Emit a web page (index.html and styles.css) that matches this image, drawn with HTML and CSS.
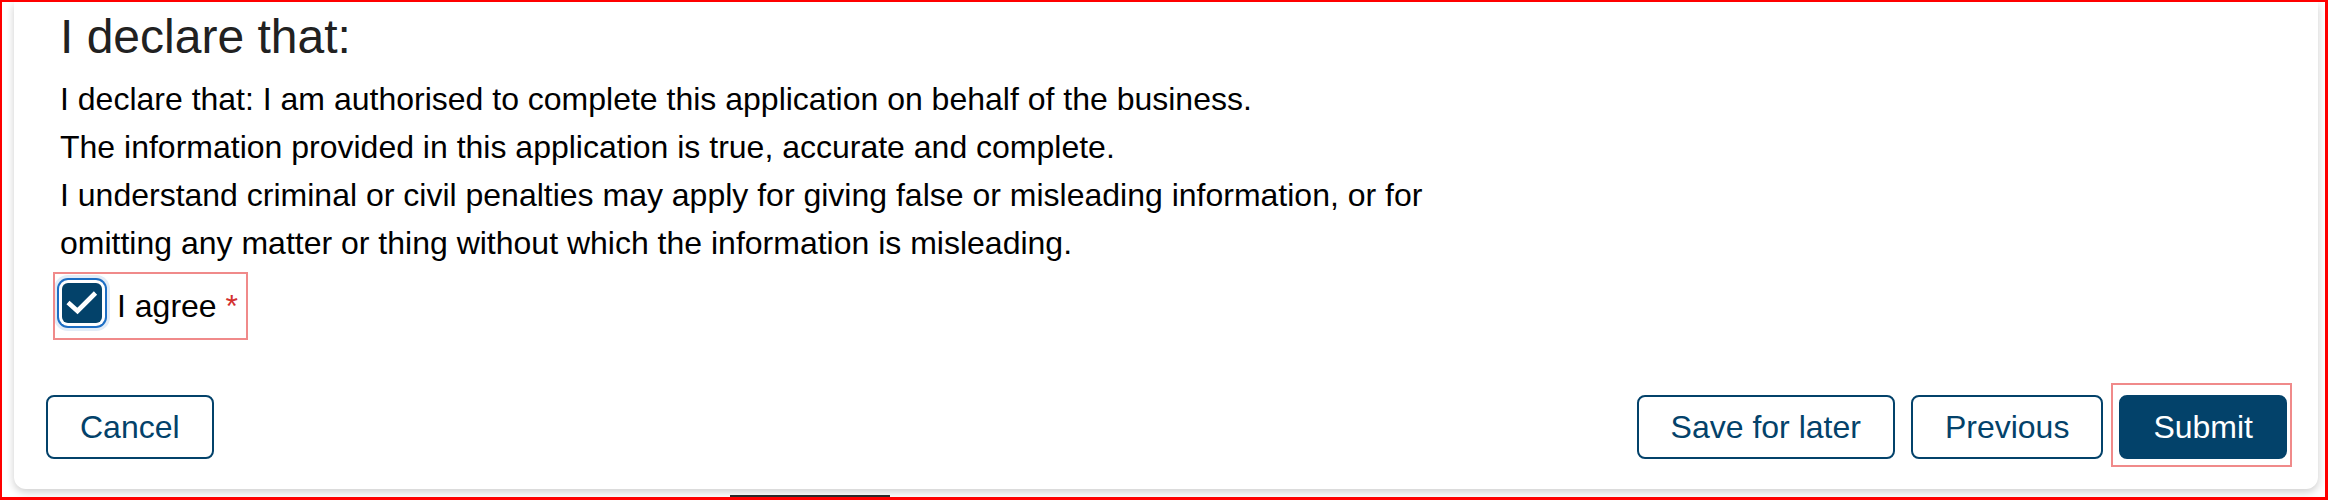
FILE: index.html
```html
<!DOCTYPE html>
<html lang="en">
<head>
<meta charset="utf-8">
<title>Declaration</title>
<link rel="stylesheet" href="styles.css">
</head>
<body>
<div class="frame">
  <div class="card">
    <section class="declaration">
      <h2 class="title">I declare that:</h2>
      <p class="statement">I declare that: I am authorised to complete this application on behalf of the business.<br>The information provided in this application is true, accurate and complete.<br>I understand criminal or civil penalties may apply for giving false or misleading information, or for omitting any matter or thing without which the information is misleading.</p>
      <label class="check-field">
        <span class="checkbox">
          <svg class="tick" viewBox="0 0 40 40" width="40" height="40" aria-hidden="true"><path d="M6 19.5 L15.5 28 L33.5 10" fill="none" stroke="#ffffff" stroke-width="4.6" stroke-linejoin="miter"/></svg>
        </span>
        <span class="check-label">I agree <span class="required">*</span></span>
      </label>
    </section>
    <div class="actions">
      <button class="btn btn-outline btn-cancel" type="button">Cancel</button>
      <div class="actions-right">
        <button class="btn btn-outline" type="button">Save for later</button>
        <button class="btn btn-outline" type="button">Previous</button>
        <span class="highlight"><button class="btn btn-primary" type="button">Submit</button></span>
      </div>
    </div>
  </div>
  <div class="scroll-thumb"></div>
</div>
</body>
</html>
```

FILE: styles.css
```css
* { box-sizing: border-box; }

html, body {
  margin: 0;
  padding: 0;
  background: #ffffff;
}

body {
  font-family: "Liberation Sans", Arial, sans-serif;
  color: #000000;
}

.frame {
  position: relative;
  width: 2328px;
  height: 500px;
  border-style: solid;
  border-color: #ff0000;
  border-width: 2px 3px 3px 2px;
  overflow: hidden;
  background: #ffffff;
}

.card {
  margin: 0 7px 0 12px;
  padding: 6px 31px 30px 32px;
  background: #ffffff;
  border-radius: 0 0 12px 12px;
  box-shadow: 0 3px 8px rgba(0, 0, 0, 0.2);
}

.declaration {
  padding-left: 14px;
}

.title {
  margin: 0;
  font-size: 48px;
  line-height: 58px;
  font-weight: 400;
  color: #212121;
}

.statement {
  margin: 9px 0 0;
  max-width: 1440px;
  font-size: 32px;
  line-height: 48px;
  color: #000000;
}

.check-field {
  display: inline-flex;
  align-items: flex-start;
  margin: 7px 0 0 -5px;
  padding: 8px 8px 8px 7px;
  outline: 2px solid #f08a8a;
  cursor: pointer;
}

.checkbox {
  display: flex;
  align-items: center;
  justify-content: center;
  width: 40px;
  height: 40px;
  margin-top: 1px;
  margin-right: 15px;
  background: #03426a;
  border-radius: 6px;
  box-shadow: 0 0 0 3px #ffffff, 0 0 0 5px #1c6ec4, 0 0 0 8px #e2ecf7;
}

.tick {
  display: block;
}

.check-label {
  font-size: 32px;
  line-height: 48px;
  color: #000000;
}

.required {
  color: #d3302f;
}

.actions {
  display: flex;
  justify-content: space-between;
  align-items: flex-start;
  margin-top: 47px;
}

.actions-right {
  display: flex;
  align-items: flex-start;
  gap: 16px;
}

.btn {
  margin-top: 10px;
  padding: 6px 32px;
  font-family: "Liberation Sans", Arial, sans-serif;
  font-size: 32px;
  line-height: 48px;
  border: 2px solid #03426a;
  border-radius: 8px;
  cursor: pointer;
}

.btn-outline {
  background: #ffffff;
  color: #03426a;
}

.btn-primary {
  background: #03426a;
  color: #ffffff;
}

.highlight {
  position: relative;
  display: flex;
}

.highlight::after {
  content: "";
  position: absolute;
  top: -2px;
  left: -8px;
  right: -5px;
  bottom: -8px;
  border: 2px solid #f08a8a;
  pointer-events: none;
}

.scroll-thumb {
  position: absolute;
  left: 728px;
  bottom: 0;
  width: 160px;
  height: 2px;
  background: #2b2b2b;
}
```
